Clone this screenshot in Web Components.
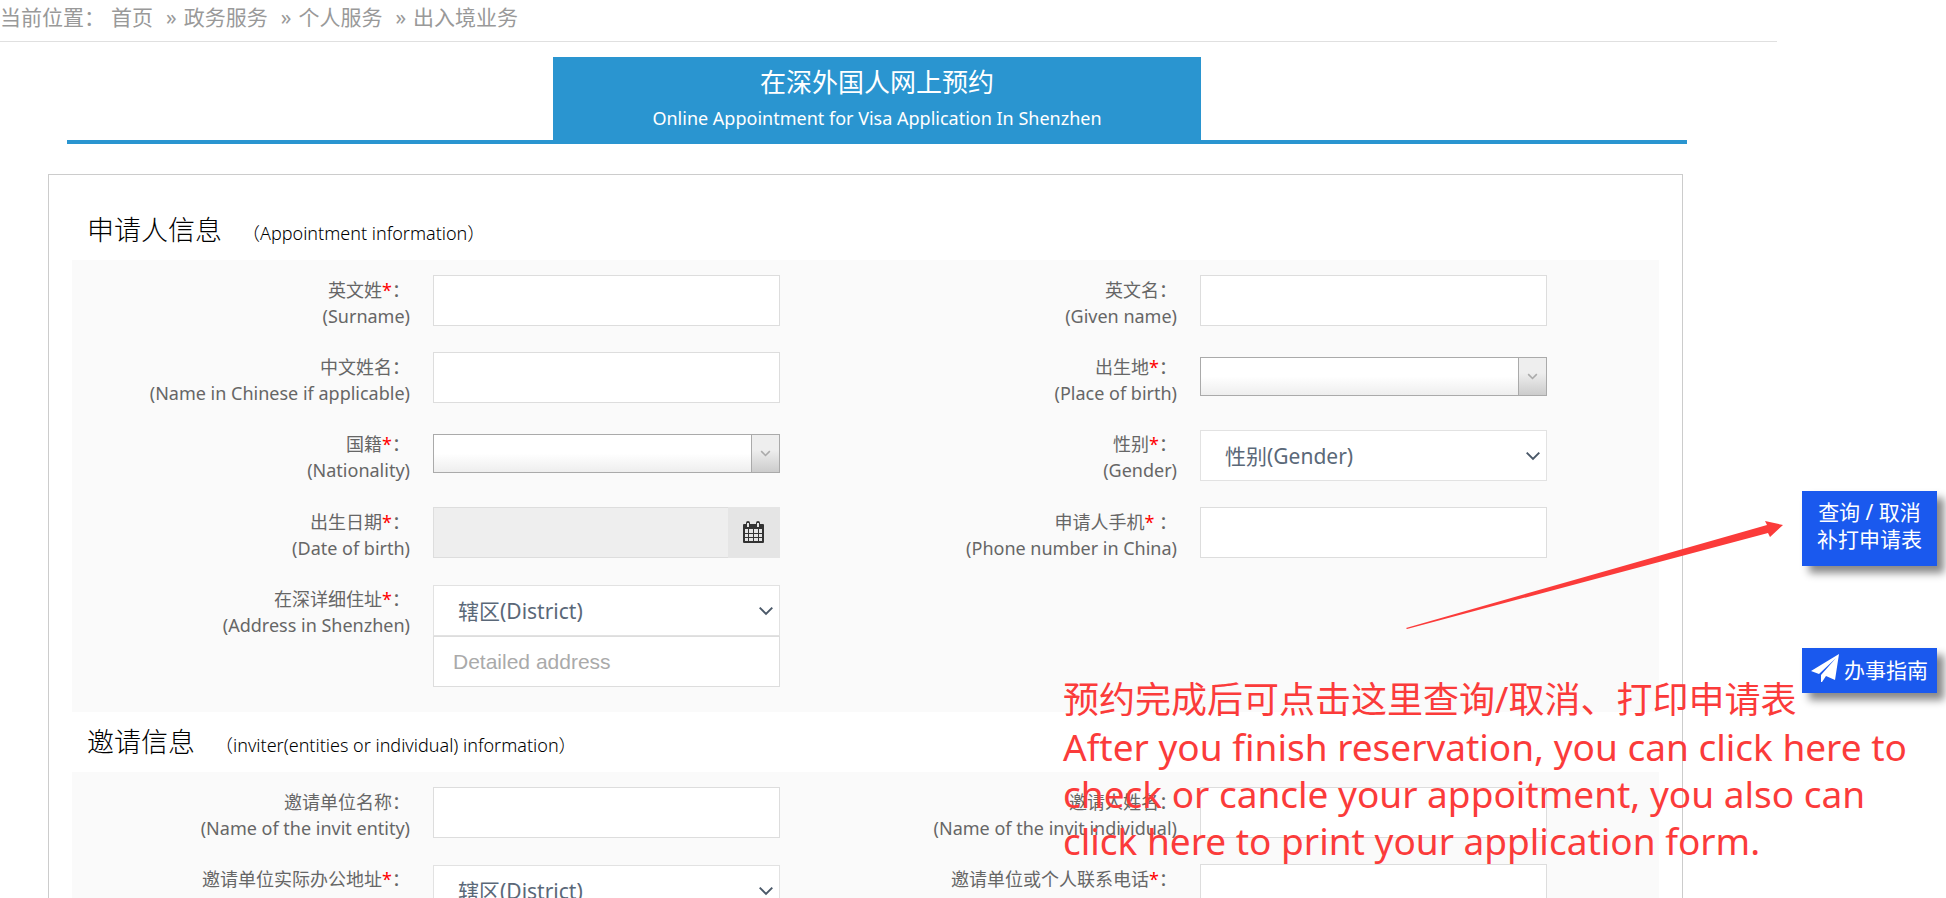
<!DOCTYPE html>
<html lang="zh-CN">
<head>
<meta charset="utf-8">
<title>在深外国人网上预约</title>
<style>
html, body {
    margin: 0;
    height: 100%;
}
body {
    position: relative;
    overflow: hidden;
    background: #fff;
    color: #666;
    font-family: "Noto Sans", "Noto Sans CJK SC", sans-serif;
    font-size: 18px;
}
main {
    margin-right: 169px;
}
</style>
</head>
<body>
<main>
    <bread-crumb label="当前位置：">
        <a href="#home">首页</a>
        <a href="#service">政务服务</a>
        <a href="#personal">个人服务</a>
        <a href="#exit-entry">出入境业务</a>
    </bread-crumb>
    <page-banner>
        在深外国人网上预约
        <span slot="sub">Online Appointment for Visa Application In Shenzhen</span>
    </page-banner>
    <form-card>
        <form-section heading="申请人信息" sub="（Appointment information）">
            <form-field zh="英文姓" en="(Surname)" required></form-field>
            <form-field zh="英文名" en="(Given name)"></form-field>
            <form-field zh="中文姓名" en="(Name in Chinese if applicable)"></form-field>
            <form-field zh="出生地" en="(Place of birth)" type="combo" required></form-field>
            <form-field zh="国籍" en="(Nationality)" type="combo" required></form-field>
            <form-field zh="性别" en="(Gender)" type="select" option="性别(Gender)" required></form-field>
            <form-field zh="出生日期" en="(Date of birth)" type="date" required></form-field>
            <form-field zh="申请人手机" en="(Phone number in China)" colon=" ：" required></form-field>
            <form-field zh="在深详细住址" en="(Address in Shenzhen)" type="address" option="辖区(District)" required></form-field>
        </form-section>
        <form-section heading="邀请信息" sub="（inviter(entities or individual) information）">
            <form-field zh="邀请单位名称" en="(Name of the invit entity)"></form-field>
            <form-field zh="邀请人姓名" en="(Name of the invit individual)"></form-field>
            <form-field zh="邀请单位实际办公地址" type="select" option="辖区(District)" required></form-field>
            <form-field zh="邀请单位或个人联系电话" required></form-field>
        </form-section>
    </form-card>
</main>
<side-links></side-links>
<guide-note>
    <p>预约完成后可点击这里查询/取消、打印申请表</p>
    <p lang="en">After you finish reservation, you can click here to</p>
    <p lang="en">check or cancle your appoitment, you also can</p>
    <p lang="en">click here to print your application form.</p>
</guide-note>

<script>
class BreadCrumb extends HTMLElement {
    connectedCallback() {
        const shadow = this.attachShadow({mode: 'open'});
        shadow.innerHTML = `
<style>
:host {
    display: block;
    border-bottom: 1px solid #e0e0e0;
    color: #999;
    font-size: 21px;
    line-height: 34px;
    padding-bottom: 7px;
}
nav {
    display: flex;
    gap: 6px;
}
::slotted(a) {
    color: inherit;
    text-decoration: none;
}
::slotted(a:not(:first-child))::before {
    content: "»";
    padding: 0 7px;
}
</style>
<nav><span>${this.getAttribute('label')}</span><slot></slot></nav>`;
    }
}
customElements.define('bread-crumb', BreadCrumb);


class PageBanner extends HTMLElement {
    connectedCallback() {
        const shadow = this.attachShadow({mode: 'open'});
        shadow.innerHTML = `
<style>
:host {
    display: block;
    margin: 15px 90px 0 67px;
    border-bottom: 4px solid #2a95d0;
}
#tab {
    box-sizing: border-box;
    width: 40%;
    margin: 0 auto;
    padding: 7px 0 4px;
    background: #2a95d0;
    color: #fff;
    text-align: center;
}
h1 {
    margin: 0;
    font-size: 26px;
    font-weight: 400;
    line-height: 36px;
}
#sub {
    font-size: 18px;
    line-height: 36px;
}
</style>
<div id="tab">
    <h1><slot></slot></h1>
    <div id="sub"><slot name="sub"></slot></div>
</div>`;
    }
}
customElements.define('page-banner', PageBanner);


class FormCard extends HTMLElement {
    connectedCallback() {
        const shadow = this.attachShadow({mode: 'open'});
        shadow.innerHTML = `
<style>
:host {
    display: block;
    margin: 30px 94px 0 48px;
    padding: 25px 23px;
    border: 1px solid #ccc;
}
</style>
<form><slot></slot></form>`;
    }
}
customElements.define('form-card', FormCard);


class FormSection extends HTMLElement {
    connectedCallback() {
        const shadow = this.attachShadow({mode: 'open'});
        shadow.innerHTML = `
<style>
:host {
    display: block;
}
h2 {
    display: flex;
    align-items: baseline;
    gap: 20px;
    margin: 0;
    padding-left: 15px;
    color: #000;
    font-size: 27px;
    font-weight: 300;
    line-height: 60px;
}
small {
    font-size: 18px;
    line-height: 24px;
}
#fields {
    display: grid;
    grid-template-columns: 1fr 1fr;
    row-gap: 26px;
    padding: 15px 53px 25px 0;
    background: #fafafa;
}
</style>
<h2>${this.getAttribute('heading')}<small>${this.getAttribute('sub')}</small></h2>
<div id="fields"><slot></slot></div>`;
    }
}
customElements.define('form-section', FormSection);


const FieldTemplate = document.createElement('template');
FieldTemplate.innerHTML = `
<style>
:host {
    display: grid;
    grid-template-columns: 338fr 347fr 36fr;
    column-gap: 23px;
    align-items: start;
}
* {
    box-sizing: border-box;
}
label {
    height: 51px;
    padding-top: 2px;
    line-height: 26px;
    text-align: right;
    white-space: nowrap;
}
label span {
    display: block;
}
.zh {
    white-space: pre;
}
.zh b {
    color: #f00;
    font-weight: 400;
}
input, select {
    width: 100%;
    height: 51px;
    margin: 0;
    border: 1px solid #ddd;
    border-radius: 0;
    background: #fff;
    font-family: inherit;
    font-size: 21px;
    outline: none;
}
input {
    padding: 0 19px;
    font-family: "Liberation Sans", sans-serif;
}
input::placeholder {
    color: #aaa;
}
select {
    appearance: none;
    padding: 0 24px;
    border-color: #e2e2e2;
    color: #5a6878;
}
/* the arrow shares the grid cell of its select */
.drop {
    display: grid;
    align-items: center;
    margin-top: 1px;
}
.drop > * {
    grid-area: 1 / 1;
}
.drop > svg {
    justify-self: end;
    margin-right: 6px;
    pointer-events: none;
}
.combo {
    margin-top: 5px;
}
.combo select {
    height: 39px;
    border-color: #aaa;
    background: linear-gradient(#fff 50%, #eee);
}
.combo .arrow {
    justify-self: end;
    display: grid;
    place-items: center;
    width: 28px;
    height: 37px;
    margin-right: 1px;
    border-left: 1px solid #aaa;
    background: linear-gradient(#eee 40%, #ccc);
    pointer-events: none;
}
.date {
    display: flex;
}
.date input {
    flex: 1;
    min-width: 0;
    border-right: 0;
    background: #eee;
}
.date button {
    display: grid;
    place-items: center;
    width: 52px;
    height: 51px;
    padding: 0 2px 0 0;
    border: 0;
    background: #e5e5e5;
}
</style>
<label for="control"><span class="zh"></span><span class="en"></span></label>
<div id="slot"></div>
`;

const chevron = (size, color, width) => `
<svg width="${size}" height="${size}" viewBox="0 0 14 14" fill="none" stroke="${color}" stroke-width="${width}"><path d="M1.500 4l5.500 5.500 5.500-5.500"/></svg>`;

const controls = {
    text: () => `<input id="control" type="text">`,
    select: (opt) => `<div class="drop"><select id="control"><option>${opt}</option></select>${chevron(16, '#4a5868', 1.7)}</div>`,
    combo: () => `
<div class="drop combo">
    <select id="control"><option></option></select>
    <span class="arrow">${chevron(11, '#aaa', 2)}</span>
</div>`,
    date: () => `
<div class="date">
    <input id="control" type="text" readonly>
    <button type="button" aria-label="calendar">
        <svg width="21" height="23" viewBox="0 0 21 23">
            <path fill="#333" d="M1 3h2V2q0-2 2-2t2 2v1h6V2q0-2 2-2t2 2v1h3q1 0 1 1v17q0 1-1 1H1q-1 0-1-1V4q0-1 1-1z"/>
            <path fill="#e5e5e5" d="M2 8h3v4H2zM6 8h4v4H6zM11 8h4v4h-4zM16 8h3v4h-3zM2 13h3v3H2zM6 13h4v3H6zM11 13h4v3h-4zM16 13h3v3h-3zM2 17h3v3H2zM6 17h4v3H6zM11 17h4v3h-4zM16 17h3v3h-3zM4 2h2v4H4zM14 2h2v4h-2z"/>
        </svg>
    </button>
</div>`,
    address: (opt) => controls.select(opt) + `<input type="text" placeholder="Detailed address" aria-label="Detailed address">`
};

class FormField extends HTMLElement {
    connectedCallback() {
        const shadow = this.attachShadow({mode: 'open'});
        shadow.append(FieldTemplate.content.cloneNode(true));
        const star = this.hasAttribute('required') ? '<b>*</b>' : '';
        const colon = this.getAttribute('colon') ?? '：';
        shadow.querySelector('.zh').innerHTML = this.getAttribute('zh') + star + colon;
        shadow.querySelector('.en').innerText = this.getAttribute('en') ?? '';
        const type = this.getAttribute('type') ?? 'text';
        shadow.getElementById('slot').innerHTML = controls[type](this.getAttribute('option'));
    }
}
customElements.define('form-field', FormField);


class SideLinks extends HTMLElement {
    connectedCallback() {
        const shadow = this.attachShadow({mode: 'open'});
        shadow.innerHTML = `
<style>
/* floats over the page at the right edge */
:host {
    position: absolute;
    top: 491px;
    right: 9px;
    width: 135px;
    display: flex;
    flex-direction: column;
    gap: 82px;
    font-size: 21px;
    line-height: 27px;
}
a {
    box-sizing: border-box;
    background: #1a59ee;
    box-shadow: 7px 7px 8px #888;
    color: #fff;
    text-align: center;
    text-decoration: none;
    white-space: nowrap;
}
#query {
    height: 75px;
    padding-top: 8px;
}
#guide {
    display: flex;
    align-items: center;
    gap: 5px;
    height: 45px;
    padding-left: 9px;
}
#guide svg {
    margin-bottom: 6px;
}
</style>
<a id="query" href="#query">查询 / 取消<br>补打申请表</a>
<a id="guide" href="#guide">
    <svg width="28" height="28" viewBox="0 0 28 28" fill="#fff"><path d="M28 0L24 26l-9-4-4 6h-1v-7L25 4 8 20 0 17z"/></svg>
    <span>办事指南</span>
</a>`;
    }
}
customElements.define('side-links', SideLinks);


class GuideNote extends HTMLElement {
    connectedCallback() {
        const shadow = this.attachShadow({mode: 'open'});
        shadow.innerHTML = `
<style>
/* red notes laid over the form */
:host {
    position: absolute;
    top: 521px;
    left: 1063px;
    color: #fb3b3a;
    font-size: 36px;
    line-height: 47px;
    white-space: nowrap;
    pointer-events: none;
}
svg {
    display: block;
    margin: 0 0 46px 343px;
}
::slotted(p) {
    margin: 0;
}
::slotted(p[lang="en"]) {
    font-size: 37px;
}
</style>
<svg width="378" height="109" viewBox="0 0 378 109" fill="currentColor"><path d="M0 107L361 4l-2-4 18 4-13 12-2-4L1 108z"/></svg>
<slot></slot>`;
    }
}
customElements.define('guide-note', GuideNote);
</script>
</body>
</html>
